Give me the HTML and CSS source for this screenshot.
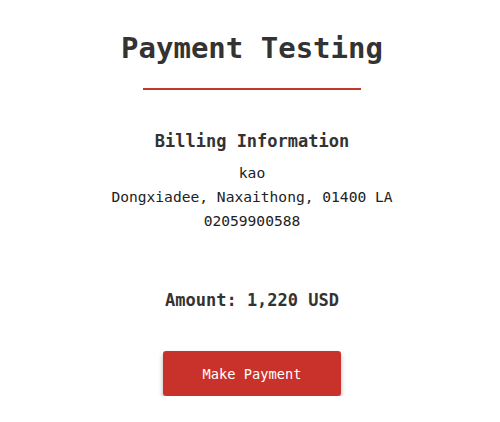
FILE: index.html
```html
<!DOCTYPE html>
<html>
<head>
<meta charset="utf-8">
<link rel="stylesheet" href="styles.css">
</head>
<body>
<main class="page">
  <h1 class="title">Payment Testing</h1>
  <div class="divider"></div>
  <section class="billing">
    <h3 class="heading">Billing Information</h3>
    <p class="line">kao</p>
    <p class="line">Dongxiadee, Naxaithong, 01400 LA</p>
    <p class="line">02059900588</p>
  </section>
  <h3 class="amount">Amount: 1,220 USD</h3>
  <button class="pay">Make Payment</button>
</main>
</body>
</html>
```
FILE: styles.css
```css
html, body {
  margin: 0;
  padding: 0;
  background: #fff;
}
body {
  font-family: "DejaVu Sans Mono", "Liberation Mono", monospace;
  color: #333;
}
.page {
  width: 500px;
  box-sizing: border-box;
  padding-left: 4px;
  display: flex;
  flex-direction: column;
  align-items: center;
}
.title {
  margin: 30px 0 0;
  font-size: 29px;
  line-height: 36px;
  font-weight: bold;
  color: #333;
}
.divider {
  width: 218px;
  height: 2px;
  background: #c0392b;
  margin-top: 22px;
}
.billing {
  margin-top: 39px;
  display: flex;
  flex-direction: column;
  align-items: center;
}
.heading {
  margin: 0 0 8px;
  font-size: 17px;
  line-height: 24px;
  font-weight: bold;
}
.line {
  margin: 0;
  font-size: 14.6px;
  line-height: 24px;
  color: #222;
}
.amount {
  margin: 55px 0 0;
  font-size: 17px;
  line-height: 24px;
  font-weight: bold;
}
.pay {
  margin-top: 39px;
  width: 178px;
  height: 45px;
  border: none;
  border-radius: 3px;
  background: #c8322b;
  color: #fff;
  font-family: "DejaVu Sans Mono", "Liberation Mono", monospace;
  font-size: 13.7px;
  box-shadow: 0 3px 5px rgba(0,0,0,0.3);
  cursor: pointer;
}
```
